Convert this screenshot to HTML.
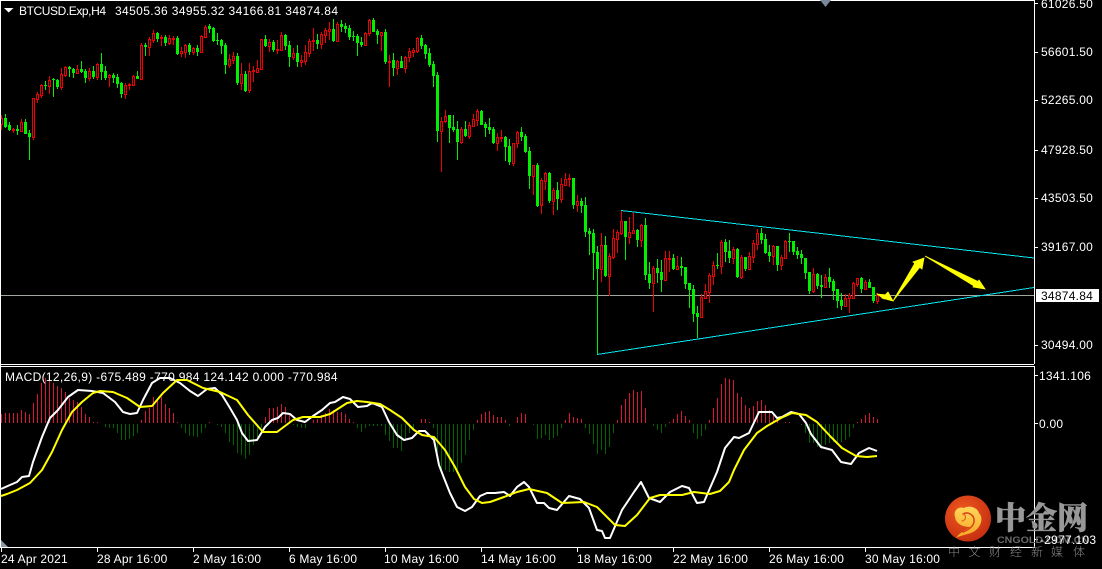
<!DOCTYPE html>
<html><head><meta charset="utf-8"><title>BTCUSD.Exp,H4</title>
<style>
html,body{margin:0;padding:0;background:#000;width:1102px;height:569px;overflow:hidden}
svg{display:block}
text{font-family:"Liberation Sans","Noto Sans CJK SC",sans-serif;font-size:12px;fill:#fff}
.t{letter-spacing:.2px}.a{letter-spacing:.25px}
</style></head><body>
<svg width="1102" height="569" viewBox="0 0 1102 569" xmlns="http://www.w3.org/2000/svg">
<defs>
<radialGradient id="o" cx=".4" cy=".35" r=".75"><stop offset="0" stop-color="#ee5a1e"/><stop offset="1" stop-color="#c22a10"/></radialGradient>
<linearGradient id="y" x1="0" y1="0" x2="0" y2="1"><stop offset="0" stop-color="#ffd75a"/><stop offset="1" stop-color="#f5a623"/></linearGradient>
</defs>
<rect width="1102" height="569" fill="#000"/>
<!-- MACD histogram -->
<g transform="translate(.5,0)" fill="none" stroke-width="1" shape-rendering="crispEdges">
<path stroke="#dc143c" d="M1 423V414M5 423V413M9 423V413M13 423V413M17 423V413M21 423V410M25 423V412M29 423V414M33 423V403M37 423V394M41 423V383M45 423V378M49 423V379M53 423V383M57 423V386M61 423V388M65 423V392M69 423V398M73 423V400M77 423V402M81 423V407M85 423V414M89 423V417M93 423V422M97 423V422M141 423V420M145 423V411M149 423V408M153 423V397M157 423V400M161 423V397M165 423V404M169 423V408M173 423V413M177 423V422M209 423V422M265 423V417M269 423V408M273 423V408M277 423V407M281 423V404M285 423V407M289 423V414M313 423V420M317 423V419M321 423V415M325 423V413M329 423V409M333 423V410M337 423V412M341 423V412M345 423V414M349 423V419M353 423V422M421 423V419M425 423V419M429 423V422M477 423V420M481 423V414M485 423V412M489 423V411M493 423V415M497 423V417M501 423V417M505 423V420M517 423V417M521 423V413M525 423V414M565 423V420M569 423V413M573 423V417M577 423V418M581 423V419M617 423V420M621 423V405M625 423V399M629 423V393M633 423V390M637 423V392M641 423V391M645 423V408M649 423V423M669 423V422M673 423V419M677 423V414M681 423V411M685 423V416M689 423V420M709 423V420M713 423V408M717 423V398M721 423V384M725 423V378M729 423V379M733 423V380M737 423V393M741 423V397M745 423V405M749 423V408M753 423V406M757 423V401M761 423V400M765 423V405M769 423V410M773 423V414M777 423V420M785 423V422M789 423V422M793 423V423M797 423V423M857 423V422M861 423V419M865 423V415M869 423V413M873 423V417M877 423V419"/>
<path stroke="#006400" d="M105 424V427M109 424V428M113 424V428M117 424V433M121 424V440M125 424V440M129 424V439M133 424V436M137 424V433M181 424V428M185 424V433M189 424V436M193 424V436M197 424V437M201 424V433M205 424V428M217 424V425M221 424V427M225 424V433M229 424V442M233 424V445M237 424V453M241 424V455M245 424V459M249 424V455M253 424V445M257 424V440M261 424V428M293 424V425M297 424V427M301 424V428M305 424V428M309 424V424M357 424V428M361 424V432M365 424V428M369 424V426M373 424V426M377 424V426M381 424V426M385 424V435M389 424V441M393 424V448M397 424V448M401 424V451M405 424V441M409 424V433M413 424V429M433 424V428M437 424V452M441 424V469M445 424V470M449 424V472M453 424V472M457 424V469M461 424V463M465 424V455M469 424V440M473 424V430M509 424V426M533 424V425M537 424V439M541 424V438M545 424V435M549 424V440M553 424V438M557 424V436M561 424V428M585 424V428M589 424V434M593 424V444M597 424V454M601 424V450M605 424V454M609 424V447M613 424V433M653 424V426M657 424V430M661 424V433M665 424V427M693 424V433M697 424V439M701 424V436M705 424V430M801 424V425M805 424V433M809 424V443M813 424V443M817 424V447M821 424V449M825 424V445M829 424V443M833 424V442M837 424V442M841 424V442M845 424V440M849 424V437M853 424V428"/>
</g>
<text x="5" y="381" letter-spacing=".32">MACD(12,26,9) -675.489 -770.984 124.142 0.000 -770.984</text>
<!-- MACD lines -->
<polyline fill="none" stroke="#fff" stroke-width="2" stroke-linejoin="round" points="1,489 10,485 17,482 22,477 29,476 33,462 42,437 50,418 58,410 68,397 78,390 92,391 103,393 115,402 123,412 130,414 137,413 143,400 152,383 160,378 170,378 180,383 190,391 198,396 207,389 215,388 222,395 230,408 237,420 242,433 248,441 257,440 265,427 272,420 278,418 283,413 290,414 297,420 305,422 313,416 322,410 330,403 335,402 343,397 350,399 358,407 367,406 372,403 382,407 389,422 397,435 404,440 412,438 419,431 425,431 434,440 439,465 444,478 450,493 457,507 465,511 472,507 480,496 487,493 495,493 504,492 510,496 517,487 524,482 529,487 537,503 544,503 549,508 557,510 569,496 580,499 589,508 597,530 602,531 605,538 610,538 622,510 634,492 641,482 649,498 660,502 670,492 682,486 689,488 697,503 704,502 710,488 717,472 725,448 734,437 739,438 749,433 759,412 772,412 777,418 782,417 791,412 799,414 806,423 811,434 821,447 832,450 841,462 851,464 859,453 869,448 877,451"/>
<polyline fill="none" stroke="#ff0" stroke-width="2" stroke-linejoin="round" points="1,496 7,494 17,490 30,483 42,470 52,452 62,430 72,412 82,402 93,393 100,391 113,392 127,398 140,407 152,406 163,393 177,380 187,380 203,388 220,392 237,400 248,415 263,432 277,432 293,420 303,417 320,417 330,414 347,403 357,401 367,402 380,404 390,410 402,418 414,430 422,435 434,437 445,450 455,467 465,487 474,499 482,503 490,502 504,497 517,492 529,489 547,493 562,503 584,502 597,507 615,525 625,526 637,515 650,498 660,495 682,495 694,492 710,494 720,491 729,482 734,470 744,450 757,433 767,426 781,418 792,413 806,415 817,422 831,437 842,448 856,456 867,457 877,456"/>
<!-- Price line -->
<path d="M0 295.5H1034" stroke="#a0a8a0" stroke-width="1" shape-rendering="crispEdges"/>
<!-- Candles: wicks -->
<g transform="translate(.5,0)" fill="none" stroke-width="1" shape-rendering="crispEdges">
<path stroke="#00f000" d="M5 114V128M9 122V131M17 125V135M25 119V134M29 130V160M45 81V90M53 78V97M57 79V89M69 66V77M73 68V78M81 61V73M85 69V83M93 66V79M101 53V80M105 66V80M113 73V83M117 74V88M121 82V98M137 71V79M145 43V56M157 32V42M165 35V46M177 36V55M189 43V55M197 45V56M209 24V33M213 27V42M217 33V45M221 39V54M225 43V74M237 53V85M245 71V92M265 35V47M273 40V52M285 34V50M289 41V67M297 45V67M317 34V49M333 19V42M341 20V32M345 23V33M349 25V40M353 31V41M357 34V56M361 37V47M373 18V32M377 29V44M385 29V64M393 53V76M401 56V68M421 35V49M425 44V59M429 48V67M433 61V87M437 72V142M449 115V143M453 115V132M457 121V160M465 121V137M481 110V125M485 122V137M489 118V134M493 127V144M505 136V161M509 139V165M521 127V141M525 134V153M529 147V189M537 163V207M549 172V203M557 182V210M573 178V209M581 198V213M585 197V237M589 228V255M593 229V280M597 246V355M605 236V277M625 221V260M637 229V247M645 218V280M649 262V289M657 259V283M661 260V292M673 254V270M681 257V276M685 267V289M689 283V308M693 285V322M697 306V338M717 253V269M725 239V262M729 240V263M737 248V278M745 257V271M761 228V244M765 234V254M769 245V262M777 246V271M789 233V252M793 241V255M797 247V259M801 250V264M805 258V279M809 272V294M817 273V289M821 275V298M829 268V288M833 279V300M837 289V308M841 293V310M861 277V293M869 279V288M873 287V303"/>
<path stroke="#f00000" d="M1 115V130M13 128V133M21 119V132M33 98V140M37 92V103M41 84V98M49 76V94M61 68V90M65 66V77M77 65V73M89 68V81M97 63V80M109 74V87M125 83V99M129 83V90M133 75V85M141 43V79M149 37V56M153 30V43M161 35V46M169 35V45M173 36V45M181 47V57M185 44V58M193 47V55M201 35V52M205 25V38M229 54V68M233 52V64M241 63V90M249 63V93M253 66V82M257 60V73M261 39V69M269 39V52M277 40V54M281 32V50M293 48V60M301 55V67M305 45V65M309 39V57M313 28V51M321 32V49M325 28V43M329 22V40M337 22V41M365 32V45M369 19V36M381 32V51M389 55V87M397 60V75M405 56V73M409 48V62M413 48V57M417 37V53M441 117V172M445 110V123M461 127V144M469 122V139M473 114V127M477 109V126M497 133V151M501 130V142M513 143V166M517 131V148M533 165V195M541 178V214M545 172V190M553 188V215M561 178V203M565 173V185M569 174V187M577 195V212M601 233V282M609 253V296M613 229V259M617 230V253M621 210V235M629 217V244M633 213V233M641 224V247M653 266V312M665 251V280M669 251V272M677 256V269M701 294V317M705 284V298M709 273V303M713 261V285M721 240V274M733 247V264M741 255V279M749 252V269M753 240V263M757 229V250M773 245V265M781 255V270M785 240V258M813 268V293M825 274V288M845 294V307M849 293V313M853 282V298M857 278V287M865 280V290M877 293V304"/>
<path stroke="#00f000" stroke-width="3" d="M5 118V127M9 125V130M17 129V131M25 122V134M29 133V137M45 85V86M53 79V80M57 80V87M69 67V69M73 69V73M81 69V72M85 71V78M93 71V77M101 64V72M105 71V78M113 75V78M117 77V84M121 83V94M137 76V79M145 45V47M157 33V39M165 37V43M177 38V54M189 45V52M197 48V52M209 26V29M213 28V41M217 40V41M221 40V46M225 45V65M237 56V83M245 74V91M265 39V46M273 42V50M285 35V46M289 45V57M297 53V62M317 40V44M333 29V41M341 24V27M345 26V29M349 28V37M353 36V37M357 36V43M361 42V45M373 20V32M377 31V35M385 32V62M393 60V68M401 61V68M421 38V46M425 45V54M429 53V65M433 64V76M437 75V131M449 115V128M453 127V130M457 129V142M465 129V136M481 111V125M485 124V128M489 127V130M493 129V143M505 137V147M509 146V162M521 132V137M525 136V152M529 151V176M537 165V206M549 173V201M557 190V199M573 178V205M581 201V206M585 205V232M589 231V234M593 233V253M597 252V269M605 245V276M625 221V237M637 230V240M645 225V275M649 274V283M657 268V273M661 272V280M673 258V269M681 266V268M685 267V284M689 283V290M693 289V314M697 313V317M717 265V266M725 242V252M729 251V258M737 249V277M745 257V269M761 233V240M765 239V253M769 252V256M777 246V265M789 241V242M793 241V252M797 251V255M801 254V258M805 258V273M809 272V291M817 274V286M821 285V287M829 277V282M833 281V291M837 289V301M841 300V306M861 278V289M869 282V288M873 287V301"/>
</g>
<!-- Red bodies -->
<g transform="translate(.5,.5)" fill="#000" stroke="#f00000" stroke-width="1" shape-rendering="crispEdges">
<path d="M0 118h2v6h-2zM12 129h2v1h-2zM20 122h2v9h-2zM32 98h2v39h-2zM36 94h2v5h-2zM40 85h2v10h-2zM48 80h2v6h-2zM60 74h2v13h-2zM64 67h2v8h-2zM76 69h2v4h-2zM88 71h2v7h-2zM96 64h2v13h-2zM108 75h2v2h-2zM124 85h2v9h-2zM128 84h2v1h-2zM132 76h2v9h-2zM140 45h2v34h-2zM148 39h2v8h-2zM152 33h2v7h-2zM160 37h2v1h-2zM168 38h2v5h-2zM172 38h2v1h-2zM180 51h2v2h-2zM184 45h2v7h-2zM192 48h2v4h-2zM200 36h2v16h-2zM204 27h2v10h-2zM228 59h2v6h-2zM232 56h2v4h-2zM240 74h2v9h-2zM248 71h2v19h-2zM252 70h2v1h-2zM256 68h2v4h-2zM260 39h2v30h-2zM268 42h2v4h-2zM276 49h2v1h-2zM280 35h2v15h-2zM292 53h2v4h-2zM300 60h2v2h-2zM304 52h2v9h-2zM308 41h2v12h-2zM312 40h2v1h-2zM320 34h2v10h-2zM324 30h2v5h-2zM328 29h2v2h-2zM336 24h2v17h-2zM364 33h2v12h-2zM368 20h2v13h-2zM380 32h2v3h-2zM388 61h2v1h-2zM396 61h2v7h-2zM404 57h2v11h-2zM408 51h2v6h-2zM412 50h2v2h-2zM416 38h2v13h-2zM440 121h2v10h-2zM444 116h2v5h-2zM460 129h2v13h-2zM468 125h2v11h-2zM472 119h2v7h-2zM476 111h2v9h-2zM496 137h2v6h-2zM500 137h2v1h-2zM512 143h2v20h-2zM516 132h2v11h-2zM532 165h2v11h-2zM540 180h2v25h-2zM544 173h2v8h-2zM552 190h2v11h-2zM560 184h2v15h-2zM564 179h2v6h-2zM568 178h2v1h-2zM576 201h2v4h-2zM600 245h2v24h-2zM608 256h2v20h-2zM612 238h2v19h-2zM616 232h2v7h-2zM620 221h2v12h-2zM628 232h2v5h-2zM632 230h2v3h-2zM640 225h2v15h-2zM652 268h2v15h-2zM664 258h2v22h-2zM668 258h2v1h-2zM676 266h2v3h-2zM700 297h2v20h-2zM704 291h2v7h-2zM708 275h2v17h-2zM712 265h2v11h-2zM720 242h2v24h-2zM732 249h2v9h-2zM740 257h2v20h-2zM748 256h2v13h-2zM752 243h2v14h-2zM756 233h2v11h-2zM772 246h2v10h-2zM780 257h2v8h-2zM784 241h2v17h-2zM812 274h2v17h-2zM824 277h2v10h-2zM844 298h2v8h-2zM848 295h2v3h-2zM852 283h2v15h-2zM856 278h2v6h-2zM864 282h2v7h-2zM876 295h2v6h-2z"/>
</g>
<!-- Trend lines -->
<g fill="none" stroke="#00e8f0" stroke-width="1" shape-rendering="crispEdges">
<path d="M621 210.5L1034 258"/>
<path d="M597 354.5L1034 287.5"/>
</g>
<!-- Arrows -->
<g fill="#ffff00" stroke="#ffff00" stroke-width=".8" stroke-linejoin="miter">
<path d="M877 294L884 299L887 295Z"/>
<path d="M893 301L882 298L888 292Z"/>
<path d="M893 301L915 263L920 267Z"/>
<path d="M924 258L913 262L922 269Z"/>
<path d="M925 256L974 286L977 281Z"/>
<path d="M985 289L973 287L979 280Z"/>
</g>
<!-- Frame -->
<g stroke="#fff" stroke-width="1" fill="none" shape-rendering="crispEdges">
<path d="M0.5 0V547M0 .5H1034.5V364M0 364.5H1034M0 366.5H1034.5V547M0 547.5H1035"/>
<path d="M1034 3.5h4M1034 52.5h4M1034 100.5h4M1034 150.5h4M1034 198.5h4M1034 247.5h4M1034 345.5h4M1034 375.5h4M1034 423.5h4M1034 539.5h4"/>
<path d="M1.5 547v5M97.5 547v5M193.5 547v5M289.5 547v5M385.5 547v5M481.5 547v5M577.5 547v5M673.5 547v5M769.5 547v5M865.5 547v5"/>
</g>
<path d="M1 540L8 547H1Z" fill="#8a98a8"/>
<path d="M820 0H831L825.5 7Z" fill="#778899"/>
<path d="M4 8H13.5L8.7 12.5Z" fill="#fff"/>
<text x="19" y="15" textLength="87" lengthAdjust="spacing">BTCUSD.Exp,H4</text>
<text x="115" y="15" textLength="223" lengthAdjust="spacing">34505.36 34955.32 34166.81 34874.84</text>
<!-- Logo -->
<circle cx="968" cy="518.5" r="23" fill="url(#o)"/>
<path d="M955 517C953 510 959 506 964 508C969 505 977 507 979 513C984 518 981 528 973 532C967 535 961 535 956 538C960 532 966 530 970 527C963 527 956 524 955 517Z" fill="url(#y)"/>
<path d="M963 514C968 511 975 515 974 522C973 527 968 530 963 532" fill="none" stroke="#d9451a" stroke-width="1.6" stroke-linecap="round"/>
<path d="M963 514C966 515 967 520 962 521" fill="none" stroke="#e8641e" stroke-width="1.2" stroke-linecap="round"/>
<text x="995" y="529" stroke="#989898" stroke-width=".5" style="font-family:'Noto Serif CJK SC','Noto Sans CJK SC',serif;font-size:31px;font-weight:900;fill:#989898">中金网</text>
<text x="997" y="543" textLength="92" lengthAdjust="spacingAndGlyphs" style="font-size:9px;fill:#6a6a6a;font-weight:bold">CNGOLD.COM.CN</text>
<text x="948 968.5 989 1010 1031 1051 1073" y="556" style="font-size:12px;fill:#8a8a8a;font-family:'Noto Sans CJK SC',sans-serif;font-weight:300">中文财经新媒体</text>
<!-- Right axis -->
<text class="a" x="1041" y="8">61026.50</text>
<text class="a" x="1041" y="56">56601.50</text>
<text class="a" x="1041" y="104">52265.00</text>
<text class="a" x="1041" y="154">47928.50</text>
<text class="a" x="1041" y="202">43503.50</text>
<text class="a" x="1041" y="251">39167.00</text>
<rect x="1036" y="289" width="63" height="13" fill="#fff"/>
<text class="a" x="1041" y="300" style="fill:#000">34874.84</text>
<text class="a" x="1041" y="349">30494.00</text>
<text class="a" x="1039" y="380">1341.106</text>
<text class="a" x="1039" y="428">0.00</text>
<text class="a" x="1040" y="544">-2977.103</text>
<!-- Time axis -->
<text class="t" x="1" y="563">24 Apr 2021</text>
<text class="t" x="97" y="563">28 Apr 16:00</text>
<text class="t" x="193" y="563">2 May 16:00</text>
<text class="t" x="289" y="563">6 May 16:00</text>
<text class="t" x="384" y="563">10 May 16:00</text>
<text class="t" x="481" y="563">14 May 16:00</text>
<text class="t" x="577" y="563">18 May 16:00</text>
<text class="t" x="673" y="563">22 May 16:00</text>
<text class="t" x="769" y="563">26 May 16:00</text>
<text class="t" x="865" y="563">30 May 16:00</text>
</svg>
</body></html>
